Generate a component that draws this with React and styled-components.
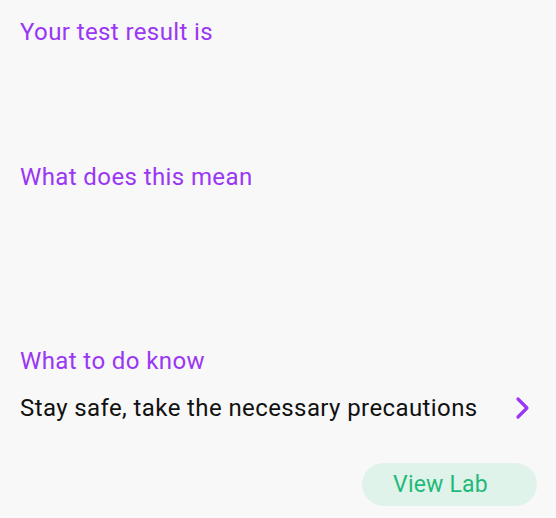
import React from 'react';
import styled, {createGlobalStyle} from 'styled-components';

const GlobalStyle = createGlobalStyle`
  html, body {
    margin: 0;
    padding: 0;
    background: #f8f8f8;
  }
  body {
    font-family: Roboto, "Liberation Sans", sans-serif;
  }
`;

const Page = styled.div`
  width: 556px;
  height: 518px;
  box-sizing: border-box;
  padding: 16px 19px 0 20px;
  display: flex;
  flex-direction: column;
`;

const Section = styled.section`
  display: flex;
  flex-direction: column;
  min-height: ${p => p.$height}px;
`;

const Heading = styled.h2`
  margin: 0;
  font-size: 24px;
  font-weight: 400;
  letter-spacing: 0.4px;
  line-height: 32px;
  color: #9a36f5;
`;

const ActionRow = styled.div`
  display: flex;
  align-items: center;
  justify-content: space-between;
  margin-top: 15px;
  padding-right: 6px;
  cursor: pointer;
`;

const RowText = styled.span`
  font-size: 24px;
  letter-spacing: 0.4px;
  line-height: 32px;
  color: #111;
`;

const Footer = styled.div`
  display: flex;
  justify-content: flex-end;
  margin-top: 39px;
`;

const LabButton = styled.button`
  width: 175px;
  height: 43px;
  padding: 0 18px 0 0;
  border: none;
  border-radius: 22px;
  background: #dff3ea;
  color: #1fba78;
  font-family: inherit;
  font-size: 23px;
  letter-spacing: 0.2px;
  cursor: pointer;
`;

const Chevron = () => (
  <svg width="16" height="24" viewBox="0 0 16 24">
    <path d="M3 3 L12 12 L3 21" fill="none" stroke="#9a36f5" strokeWidth="3.2"
          strokeLinecap="round" strokeLinejoin="round"/>
  </svg>
);

const App = () => (
  <>
    <GlobalStyle/>
    <Page>
      <Section $height={145}>
        <Heading>Your test result is</Heading>
      </Section>
      <Section $height={184}>
        <Heading>What does this mean</Heading>
      </Section>
      <Section>
        <Heading>What to do know</Heading>
        <ActionRow>
          <RowText>Stay safe, take the necessary precautions</RowText>
          <Chevron/>
        </ActionRow>
        <Footer>
          <LabButton>View Lab</LabButton>
        </Footer>
      </Section>
    </Page>
  </>
);

export default App;
